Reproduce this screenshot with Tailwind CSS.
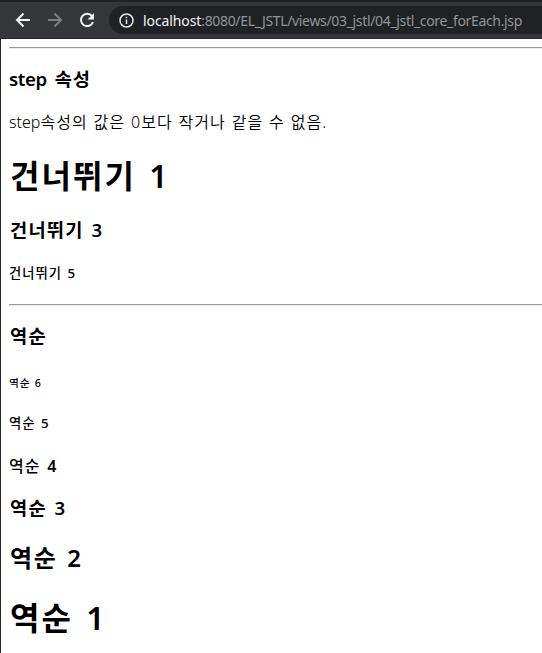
<!DOCTYPE html>
<html lang="ko">
<head>
<meta charset="utf-8">
<title>04_jstl_core_forEach</title>
<script src="https://cdn.jsdelivr.net/npm/@tailwindcss/browser@4"></script>
</head>
<body class="w-[542px] h-[653px] overflow-hidden bg-white text-black font-['Noto_Sans','Noto_Sans_CJK_KR',sans-serif]">
<div class="flex flex-col h-[653px] border-l border-[#252427]">
  <header class="h-[39px] shrink-0 -ml-px bg-[#35363a] border-t-2 border-b border-t-[#202124] border-b-[#29282c] flex items-center">
    <svg class="w-4 h-4 ml-[15px] shrink-0" viewBox="0 0 16 16" fill="none" stroke="#f1f3f4" stroke-width="2"><path d="M15 8H2.5M8.500 1.500L2 8l6.500 6.500"/></svg>
    <svg class="w-4 h-4 ml-4 shrink-0" viewBox="0 0 16 16" fill="none" stroke="#7d7e82" stroke-width="2"><path d="M1 8h12.500M7.500 1.500L14 8l-6.500 6.500"/></svg>
    <svg class="w-4 h-4 ml-4 shrink-0" viewBox="0 0 16 16" fill="none" stroke="#f1f3f4" stroke-width="2"><path d="M13 4A6.200 6.200 0 1 0 14 10"/><path d="M15 1v6.500H8.500z" fill="#f1f3f4" stroke="none"/></svg>
    <div class="h-7 ml-[14px] flex-1 rounded-l-full bg-[#202124] flex items-center">
      <svg class="w-[15px] h-[15px] ml-[10px] shrink-0" viewBox="0 0 15 15" fill="none" stroke="#e8eaed" stroke-width="1.500"><circle cx="7.500" cy="7.500" r="6.500"/><path d="M7.500 6.500v4.500M7.500 3.800v1.500"/></svg>
      <div class="ml-[9px] text-[14px] whitespace-nowrap text-[#929497] font-['Noto_Sans',sans-serif]"><span class="text-[#f1f3f4] tracking-[-0.1px]">localhost</span><span class="tracking-[-0.335px]">:8080/EL_JSTL/views/03_jstl/04_jstl_core_forEach.jsp</span></div>
    </div>
  </header>
  <main class="flex flex-col pl-2 pt-2 whitespace-nowrap leading-none">
    <hr class="h-[2px] shrink-0 border-t border-b border-t-[#999] border-b-[#eee]">
    <h3 class="h-[61px] flex items-center text-[18.700px] font-semibold tracking-[0.05em]"><span><span class="tracking-[-0.02em]">step</span><span class="ml-[2px]"> 속성</span></span></h3>
    <p class="h-6 flex items-center text-[16px] font-[350] tracking-[0.067em] [word-spacing:0.035em]"><span><span class="tracking-[0em]">step</span>속성의 값은 0보다 작거나 같을 수 없음.</span></p>
    <h1 class="h-[84px] flex items-center text-[32px] font-semibold tracking-[0.065em] [word-spacing:0.09em] pl-px">건너뛰기 1</h1>
    <h3 class="h-6 flex items-center text-[18.700px] font-semibold tracking-[0.065em] [word-spacing:0.09em] pl-px">건너뛰기 3</h3>
    <h5 class="h-[64px] flex items-center text-[13.300px] font-medium tracking-[0.075em] [word-spacing:0.09em]">건너뛰기 5</h5>
    <hr class="h-[2px] -mt-[2px] shrink-0 border-t border-b border-t-[#999] border-b-[#eee]">
    <h3 class="h-[61px] flex items-center text-[18.700px] font-semibold tracking-[0.075em] pl-px">역순</h3>
    <h6 class="h-8 flex items-center text-[10.700px] font-medium tracking-[0.075em] [word-spacing:0.09em]">역순 6</h6>
    <h5 class="h-[50px] flex items-center text-[13.300px] font-medium tracking-[0.075em] [word-spacing:0.09em]">역순 5</h5>
    <h4 class="h-[33px] flex items-center text-[16px] font-medium tracking-[0.065em] [word-spacing:0.09em]"><span>역순 <span class="font-semibold">4</span></span></h4>
    <h3 class="h-[52px] flex items-center text-[18.700px] font-semibold tracking-[0.065em] [word-spacing:0.09em] pl-px">역순 3</h3>
    <h2 class="h-12 flex items-center text-[24px] font-semibold tracking-[0.065em] [word-spacing:0.09em] pl-px">역순 2</h2>
    <h1 class="h-[71px] flex items-center text-[32px] font-semibold tracking-[0.065em] [word-spacing:0.09em] pl-px">역순 1</h1>
  </main>
</div>
</body>
</html>
